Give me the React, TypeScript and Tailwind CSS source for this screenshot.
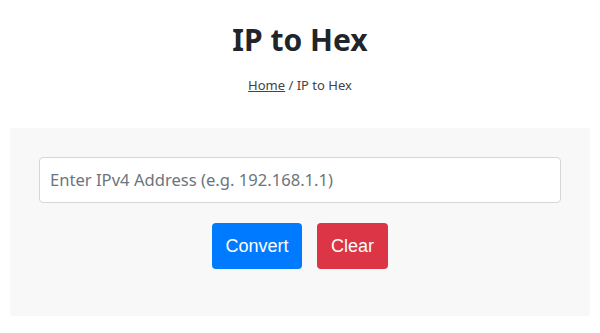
export default function App() {
  return (
    <div className="w-[600px] h-[333px] bg-white overflow-hidden" style={{ fontFamily: '"Noto Sans", "Open Sans", sans-serif' }}>
      <div className="pt-[18px] text-center">
        <h1 className="text-[30px] leading-[44px] font-bold text-[#212529]">IP to Hex</h1>
        <div className="mt-[13px] text-[13px] leading-[20px] text-[#444]">
          <a className="underline text-[#444]">Home</a> / IP to Hex
        </div>
      </div>
      <div className="mx-[10px] mt-[33px] bg-[#f8f8f8] rounded-[3px] px-[29px] pt-[29px] pb-[47px]">
        <div className="h-[46px] bg-white border border-[#d6d6d6] rounded-[4px] flex items-center px-[10px] text-[16.6px] text-[#6c757d]">
          Enter IPv4 Address (e.g. 192.168.1.1)
        </div>
        <div className="mt-[20px] flex justify-center gap-[15px]" style={{ fontFamily: '"Liberation Sans", Arial, sans-serif' }}>
          <button className="w-[90px] h-[46px] bg-[#007bff] text-white text-[18px] rounded-[4px]">Convert</button>
          <button className="w-[71px] h-[46px] bg-[#dc3545] text-white text-[18px] rounded-[4px]">Clear</button>
        </div>
      </div>
    </div>
  );
}
